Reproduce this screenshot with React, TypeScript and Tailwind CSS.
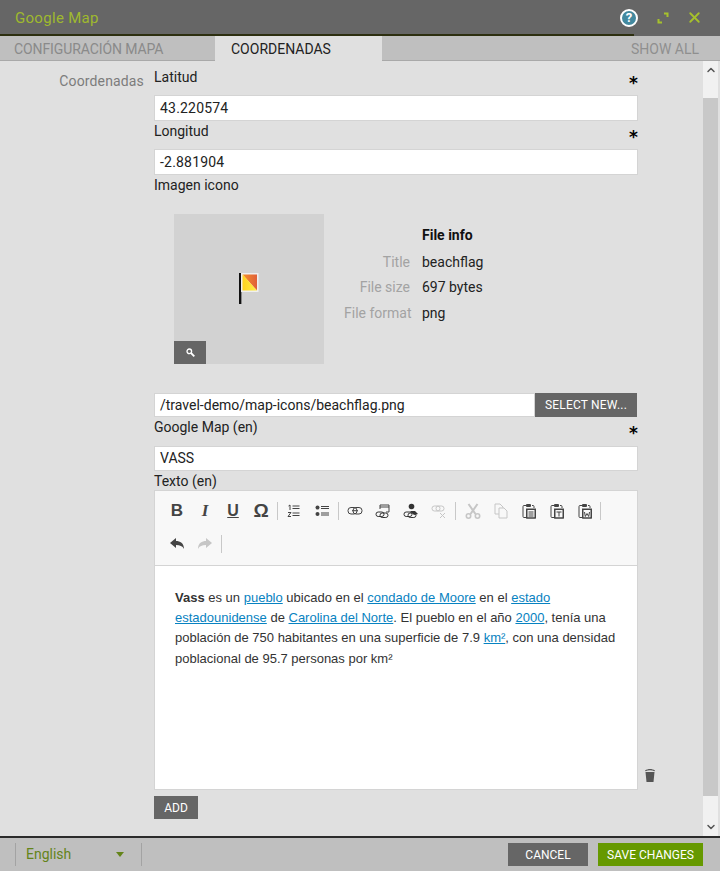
// App.tsx
// Google Map settings dialog with tabs, coordinate fields and a rich text editor
import type { ReactNode } from 'react';
import { ChevronDown, ChevronUp, X } from 'lucide-react';

const din = "font-['Roboto',sans-serif]";

function Required() {
  return <span className="mt-[6px] font-['DejaVu_Sans',sans-serif] text-[17px] font-bold leading-[20px] text-black">*</span>;
}

function FieldLabel({ text, required, className = '' }: { text: string; required?: boolean; className?: string }) {
  return (
    <div className={`flex justify-between pr-[5px] text-[14px] leading-[20px] text-[#222] ${className}`}>
      <span>{text}</span>
      {required && <Required />}
    </div>
  );
}

function TextField({ value, className = '' }: { value: string; className?: string }) {
  return (
    <div className={`flex items-center border border-[#d4d4d4] bg-white pl-[5px] text-[14px] text-[#222] ${className}`}>
      {value}
    </div>
  );
}

function Tool({ children }: { children: ReactNode }) {
  return <div className="flex h-[28px] w-[28px] items-center justify-center">{children}</div>;
}

function Sep({ className = 'w-[5px] pl-[2px]' }: { className?: string }) {
  return (
    <div className={`flex h-[20px] items-center ${className}`}>
      <div className="h-[18px] w-px bg-[#c8c8c8]" />
    </div>
  );
}

function Icon({ children, muted }: { children: ReactNode; muted?: boolean }) {
  return (
    <svg
      width="16"
      height="16"
      viewBox="0 0 16 16"
      fill="none"
      stroke={muted ? '#c6c6c6' : '#444'}
      strokeWidth="1"
    >
      {children}
    </svg>
  );
}

function Clipboard({ children }: { children: ReactNode }) {
  return (
    <Icon>
      <path d="M5 2.500H3a1 1 0 0 0-1 1v10a1 1 0 0 0 1 1h2M11 2.500h1a1 1 0 0 1 1 1v1.500" />
      <rect x="5" y="1" width="5" height="3" rx="1" fill="#444" stroke="none" />
      <rect x="5.500" y="6" width="9" height="9" fill="#f8f8f8" />
      {children}
    </Icon>
  );
}

function Chain({ muted }: { muted?: boolean }) {
  return (
    <>
      <rect x="1" y={9} width="8" height="4.500" rx="2.200" stroke={muted ? '#c6c6c6' : '#333'} />
      <rect x="5" y={10} width="8" height="4.500" rx="2.200" stroke={muted ? '#c6c6c6' : '#333'} />
    </>
  );
}

function Toolbar() {
  return (
    <div className="border-b border-[#d4d4d4] bg-[#f8f8f8] pl-[8px] pt-[6px] text-[#444]">
      <div className="flex h-[28px] items-center">
        <Tool>
          <span className="font-['Liberation_Sans',sans-serif] text-[17px] font-bold">B</span>
        </Tool>
        <Tool>
          <span className="font-['Liberation_Serif',serif] text-[17px] font-bold italic">I</span>
        </Tool>
        <Tool>
          <span className="font-['Liberation_Sans',sans-serif] text-[16px] font-bold underline">U</span>
        </Tool>
        <Tool>
          <span className="font-['Liberation_Sans',sans-serif] text-[19px] font-bold">Ω</span>
        </Tool>
        <Sep />
        <Tool>
          <Icon>
            <path d="M6.500 3h7M6.500 5.500h7M6.500 10h7M6.500 12.500h7" />
            <path d="M2.500 3l1.500-1v5" />
            <path d="M2 9.500h3l-3 4h3" />
          </Icon>
        </Tool>
        <Tool>
          <Icon>
            <circle cx="3.500" cy="4.500" r="2" fill="#444" stroke="none" />
            <circle cx="3.500" cy="11" r="2" fill="#444" stroke="none" />
            <path d="M7 3.500h8M7 5.500h8M7 10h8M7 12h8" />
          </Icon>
        </Tool>
        <Sep />
        <Tool>
          <Icon>
            <rect x="1" y="4.500" width="9" height="6.500" rx="3" />
            <rect x="6" y="4.500" width="9" height="6.500" rx="3" />
            <path d="M5 7.700h6" />
          </Icon>
        </Tool>
        <Tool>
          <Icon>
            <path d="M5 6V2h9v7h-3M5 4h9" />
            <Chain />
          </Icon>
        </Tool>
        <Tool>
          <Icon>
            <circle cx="8.500" cy="3.500" r="2.800" fill="#333" stroke="none" />
            <path d="M7 8h5l3 3-4 1z" fill="#333" stroke="none" />
            <Chain />
          </Icon>
        </Tool>
        <Tool>
          <Icon muted>
            <rect x="1" y="3" width="8" height="5" rx="2.400" />
            <rect x="5" y="3" width="8" height="5" rx="2.400" />
            <path d="M9 10l5 5M14 10l-5 5" />
          </Icon>
        </Tool>
        <Sep className="w-[6px] pl-[2px]" />
        <Tool>
          <Icon muted>
            <circle cx="3.500" cy="13" r="2.200" strokeWidth="1.600" />
            <circle cx="12.500" cy="13" r="2.200" strokeWidth="1.600" />
            <path d="M3.500 1l7 10M12.500 1l-7 10" strokeWidth="2" />
          </Icon>
        </Tool>
        <Tool>
          <Icon muted>
            <path d="M6 11H2V1h5l3 3v1" />
            <path d="M6 5h5l3 3v7H6z" />
          </Icon>
        </Tool>
        <Tool>
          <Clipboard>
            <rect x="6" y="6.500" width="8" height="8.500" />
            <path d="M7.500 9h5M7.500 11h5M7.500 13h5" />
          </Clipboard>
        </Tool>
        <Tool>
          <Clipboard>
            <rect x="6" y="6.500" width="8" height="8.500" />
            <path d="M7.500 9h5M10 9v4.500" />
          </Clipboard>
        </Tool>
        <Tool>
          <Clipboard>
            <rect x="6" y="6.500" width="8" height="8.500" />
            <path d="M7.500 9l.8 4.500 1.700-3 1.700 3 .8-4.500" />
          </Clipboard>
        </Tool>
        <Sep className="w-[3px] pl-px" />
      </div>
      <div className="mt-[5px] flex h-[28px] items-center">
        <Tool>
          <svg width="16" height="14" viewBox="0 0 16 14" fill="#444">
            <path d="M1 6l6-5v3c4 0 8 2 8 8-1.500-3-4-4-8-4v3z" />
          </svg>
        </Tool>
        <Tool>
          <svg width="16" height="14" viewBox="0 0 16 14" fill="#c6c6c6">
            <path d="M15 6L9 1v3C5 4 1 6 1 12c1.500-3 4-4 8-4v3z" />
          </svg>
        </Tool>
        <Sep />
      </div>
      <div className="h-[7px]" />
    </div>
  );
}

function Doc({ children }: { children: ReactNode }) {
  return <a className="text-[#0782c1] underline">{children}</a>;
}

function BeachFlag() {
  return (
    <svg width="20" height="32" viewBox="0 0 20 32">
      <defs>
        <linearGradient id="flagRed" x1="0" y1="0" x2="1" y2="0">
          <stop offset="0" stopColor="#f5902a" />
          <stop offset="1" stopColor="#e0603a" />
        </linearGradient>
        <linearGradient id="flagYellow" x1="0" y1="0" x2="1" y2="0">
          <stop offset="0" stopColor="#ffd21f" />
          <stop offset="1" stopColor="#fff04a" />
        </linearGradient>
      </defs>
      <rect x="0" y="0" width="2" height="31" fill="#111" />
      <rect x="2" y="0" width="1" height="31" fill="#8a8a8a" />
      <rect x="2" y="0" width="17.500" height="19" fill="#efefef" />
      <path d="M3.500 1.500h14.500v16z" fill="url(#flagRed)" />
      <path d="M3.500 1.500v16h14.500z" fill="url(#flagYellow)" />
    </svg>
  );
}

export default function App() {
  return (
    <div className={`flex h-[871px] w-[720px] flex-col overflow-hidden bg-[#e0e0e0] ${din}`}>
      {/* Title bar */}
      <header className="flex h-[34px] shrink-0 items-center justify-between bg-[#666] pl-[15px] pr-[17px] pt-[1px]">
        <span className="pt-[1px] text-[15px] tracking-[0.3px] text-[#9fb92e]">Google Map</span>
        <div className="flex items-center">
          <span className="flex h-[18px] w-[18px] items-center justify-center rounded-full border-2 border-white bg-[#43899f] text-[13px] font-bold leading-none text-white">
            ?
          </span>
          <svg width="12" height="12" viewBox="0 0 12 12" fill="none" stroke="#a6c12c" strokeWidth="2" className="ml-[19px]">
            <path d="M7 1.500h3.500V5M1.500 7v3.500H5" />
          </svg>
          <X size={17} strokeWidth={2.6} color="#a6c12c" className="ml-[17px]" />
        </div>
      </header>
      <div className="flex h-[2px] shrink-0">
        <div className="w-[634px] bg-[#2d2f10]" />
        <div className="flex-1 bg-[#666]" />
      </div>

      {/* Tabs */}
      <div className="flex h-[25px] shrink-0 items-stretch justify-between bg-[#bfbfbf] text-[14px]">
        <div className="flex">
          <div className="flex w-[215px] items-center border-b border-[#a9a9a9] pl-[14px] pt-[2px] tracking-[-0.1px] text-[#8a8a8a]">
            CONFIGURACIÓN MAPA
          </div>
          <div className="flex w-[167px] items-center bg-[#e0e0e0] pl-[16px] pt-[2px] text-[#222]">COORDENADAS</div>
        </div>
        <div className="flex flex-1 items-center justify-end border-b border-[#a9a9a9] pr-[21px] pt-[2px] text-[#8f8f8f]">
          SHOW ALL
        </div>
      </div>

      {/* Scrollable content */}
      <div className="flex min-h-0 flex-1">
        <main className="flex w-[702px] pt-[6px]">
          <div className="w-[154px] shrink-0 pr-[10px] pt-[4px] text-right text-[14px] leading-[20px] tracking-[0.15px] text-[#7c7c7c]">
            Coordenadas
          </div>
          <div className="w-[489px] shrink-0">
            <FieldLabel text="Latitud" required className="h-[28px]" />
            <TextField value="43.220574" className="h-[26px] w-[484px] tracking-[0.2px]" />
            <FieldLabel text="Longitud" required className="h-[28px]" />
            <TextField value="-2.881904" className="h-[26px] w-[484px] tracking-[0.2px]" />
            <FieldLabel text="Imagen icono" />

            <div className="ml-[20px] mt-[19px] flex h-[150px]">
              <div className="relative flex h-[150px] w-[150px] items-center justify-center bg-[#d2d2d2]">
                <BeachFlag />
                <div className="absolute bottom-0 left-0 flex h-[23px] w-[32px] items-center justify-center bg-[#666]">
                  <svg width="9" height="9" viewBox="0 0 9 9" fill="none" stroke="#fff">
                    <circle cx="3.300" cy="3.300" r="2.300" strokeWidth="1.300" />
                    <path d="M5 5l3.300 3.300" strokeWidth="1.800" />
                  </svg>
                </div>
              </div>
              <div className="ml-[20px] pt-[9px] text-[14px] leading-[25.4px]">
                <div className="grid grid-cols-[66px_auto] gap-x-[12px] gap-y-[0.3px] whitespace-nowrap">
                  <span className="col-span-2 pl-[78px] font-bold text-[#111]">File info</span>
                  <span className="mt-[1px] text-right text-[#a3a3a3]">Title</span>
                  <span className="mt-[1px] text-[#222]">beachflag</span>
                  <span className="text-right text-[#a3a3a3]">File size</span>
                  <span className="text-[#222]">697 bytes</span>
                  <span className="text-right text-[#a3a3a3]">File format</span>
                  <span className="text-[#222]">png</span>
                </div>
              </div>
            </div>

            <div className="mt-[29px] flex h-[24px] w-[483px]">
              <TextField value="/travel-demo/map-icons/beachflag.png" className="h-[24px] w-[381px]" />
              <div className="flex flex-1 items-center justify-center bg-[#666] text-[12px] tracking-[0.2px] text-white">
                SELECT NEW...
              </div>
            </div>

            <FieldLabel text="Google Map (en)" required className="h-[29px]" />
            <TextField value="VASS" className="h-[25px] w-[484px]" />
            <FieldLabel text="Texto (en)" className="h-[19px]" />

            <div className="relative w-[484px]">
              <div className="h-[300px] border border-[#d4d4d4] bg-white">
                <Toolbar />
                <div className="px-[20px] pt-[22px] font-['Liberation_Sans',sans-serif] text-[13px] leading-[20.2px] text-[#333]">
                  <b>Vass</b> es un <Doc>pueblo</Doc> ubicado en el <Doc>condado de Moore</Doc> en el{' '}
                  <Doc>estado estadounidense</Doc> de <Doc>Carolina del Norte</Doc>. El pueblo en el año{' '}
                  <Doc>2000</Doc>, tenía una población de 750 habitantes en una superficie de 7.9 <Doc>km²</Doc>,
                  con una densidad poblacional de 95.7 personas por km²
                </div>
              </div>
              <svg width="12" height="14" viewBox="0 0 12 14" fill="#555" className="absolute -right-[18px] bottom-[8px]">
                <path d="M1.500 4h9L9.500 14h-7zM1 2.500C4 .5 8 .5 11 2.500L10.500 3.300C8 2 4 2 1.500 3.300z" />
              </svg>
            </div>
            <div className="mt-[6px] flex h-[23px] w-[44px] items-center justify-center bg-[#666] text-[12px] text-white">
              ADD
            </div>
          </div>
        </main>

        {/* Scrollbar */}
        <div className="ml-px flex w-[15px] flex-col items-center justify-between bg-[#f1f1f1]">
          <div className="flex h-[37px] w-full flex-col items-center pt-[3px]">
            <ChevronUp size={12} strokeWidth={3} color="#555" />
          </div>
          <div className="w-full flex-1 bg-[#c8c8c8]" />
          <div className="flex h-[40px] w-full flex-col items-center justify-end pb-[3px]">
            <ChevronDown size={12} strokeWidth={3} color="#555" />
          </div>
        </div>
        <div className="w-[2px] bg-[#e0e0e0]" />
      </div>

      {/* Footer */}
      <footer className="flex h-[35px] shrink-0 items-center justify-between border-t-2 border-[#2b2b2b] bg-[#bfbfbf] pl-[15px] pr-[17px]">
        <div className="flex h-[23px] w-[127px] items-center justify-between border-x border-[#a3a3a3] pl-[10px] pr-[17px]">
          <span className="text-[14px] text-[#64841a]">English</span>
          <span className="h-0 w-0 border-x-[4px] border-t-[5px] border-x-transparent border-t-[#64841a]" />
        </div>
        <div className="flex gap-[10px] text-[12px] text-white">
          <div className="flex h-[23px] w-[80px] items-center justify-center bg-[#666]">CANCEL</div>
          <div className="flex h-[23px] w-[105px] items-center justify-center bg-[#669900]">SAVE CHANGES</div>
        </div>
      </footer>
    </div>
  );
}
